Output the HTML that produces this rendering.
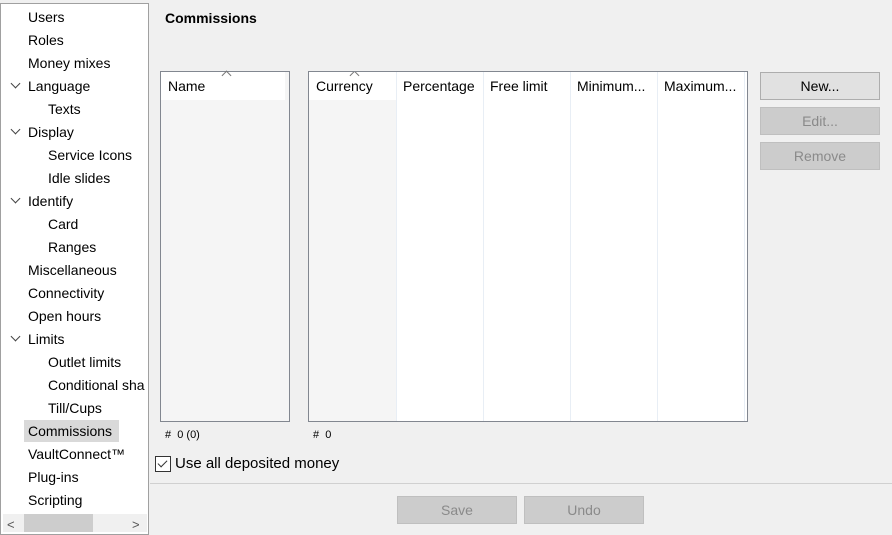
<html><head><style>
body{margin:0;width:892px;height:535px;background:#f0f0f0;font-family:"Liberation Sans",sans-serif;font-size:14px;color:#000;position:relative;overflow:hidden}
.a{position:absolute}
#left{left:0;top:3px;width:147px;height:530px;background:#fff;border:1px solid #a0a0a0}
.it{position:absolute;height:22px;line-height:22px;white-space:nowrap}
.chev{position:absolute;left:11px;width:6px;height:6px;border-right:1.5px solid #444;border-bottom:1.5px solid #444;transform:rotate(45deg)}
.btn{position:absolute;width:118px;height:26px;border:1px solid #adadad;background:#e1e1e1;text-align:center;line-height:26px}
.dis{background:#cccccc;border-color:#bfbfbf;color:#8a8a8a}
.col{position:absolute;top:0;height:349px;border-right:1px solid #e8eef5}
.hd{position:absolute;top:6px;white-space:nowrap}
.caret{position:absolute;top:0;width:6px;height:6px;border-left:1px solid #777;border-top:1px solid #777;transform:rotate(45deg)}
</style></head><body>
<div class="a" id="left">
<div class="it" style="left:27px;top:2px">Users</div>
<div class="it" style="left:27px;top:25px">Roles</div>
<div class="it" style="left:27px;top:48px">Money mixes</div>
<div class="chev" style="top:76px"></div><div class="it" style="left:27px;top:71px">Language</div>
<div class="it" style="left:47px;top:94px">Texts</div>
<div class="chev" style="top:122px"></div><div class="it" style="left:27px;top:117px">Display</div>
<div class="it" style="left:47px;top:140px">Service Icons</div>
<div class="it" style="left:47px;top:163px">Idle slides</div>
<div class="chev" style="top:191px"></div><div class="it" style="left:27px;top:186px">Identify</div>
<div class="it" style="left:47px;top:209px">Card</div>
<div class="it" style="left:47px;top:232px">Ranges</div>
<div class="it" style="left:27px;top:255px">Miscellaneous</div>
<div class="it" style="left:27px;top:278px">Connectivity</div>
<div class="it" style="left:27px;top:301px">Open hours</div>
<div class="chev" style="top:329px"></div><div class="it" style="left:27px;top:324px">Limits</div>
<div class="it" style="left:47px;top:347px">Outlet limits</div>
<div class="it" style="left:47px;top:370px">Conditional sha</div>
<div class="it" style="left:47px;top:393px">Till/Cups</div>
<div class="it" style="left:23px;top:416px;width:95px;background:#d9d9d9;padding-left:4px;box-sizing:border-box">Commissions</div>
<div class="it" style="left:27px;top:439px">VaultConnect™</div>
<div class="it" style="left:27px;top:462px">Plug-ins</div>
<div class="it" style="left:27px;top:485px">Scripting</div>
<div class="a" style="left:2px;top:510px;width:144px;height:18px;background:#f0f0f0"></div>
<div class="a" style="left:23px;top:510px;width:69px;height:18px;background:#cdcdcd"></div>
<div class="a" style="left:6px;top:513px;color:#555;font-size:13px">&lt;</div>
<div class="a" style="left:131px;top:513px;color:#555;font-size:13px">&gt;</div>
</div>
<div class="a" style="left:165px;top:10px;font-weight:bold;font-size:14px">Commissions</div>
<div class="a" style="left:160px;top:71px;width:128px;height:349px;border:1px solid #828790;background:#f5f5f5">
<div class="a" style="left:0;top:0;width:124px;height:28px;background:#fff"></div>
<div class="hd" style="left:7px">Name</div>
<div class="caret" style="left:62px"></div>
</div>
<div class="a" style="left:308px;top:71px;width:438px;height:349px;border:1px solid #828790;background:#fff;overflow:hidden">
<div class="col" style="left:0;width:87px;background:#f5f5f5"><div class="a" style="left:0;top:0;width:87px;height:28px;background:#fff"></div></div>
<div class="col" style="left:88px;width:86px"></div>
<div class="col" style="left:175px;width:86px"></div>
<div class="col" style="left:262px;width:86px"></div>
<div class="col" style="left:349px;width:86px"></div>
<div class="hd" style="left:7px">Currency</div>
<div class="caret" style="left:42px"></div>
<div class="hd" style="left:94px">Percentage</div>
<div class="hd" style="left:181px">Free limit</div>
<div class="hd" style="left:268px">Minimum...</div>
<div class="hd" style="left:355px">Maximum...</div>
</div>
<div class="btn" style="left:760px;top:72px">New...</div>
<div class="btn dis" style="left:760px;top:107px">Edit...</div>
<div class="btn dis" style="left:760px;top:142px">Remove</div>
<div class="a" style="left:165px;top:429px;font-size:11px">#&nbsp; 0 (0)</div>
<div class="a" style="left:313px;top:429px;font-size:11px">#&nbsp; 0</div>
<div class="a" style="left:155px;top:456px;width:14px;height:14px;border:1px solid #333;background:#fff"><div class="a" style="left:4px;top:1px;width:4px;height:8px;border-right:1.5px solid #333;border-bottom:1.5px solid #333;transform:rotate(45deg)"></div></div>
<div class="a" style="left:175px;top:455px;font-size:15px">Use all deposited money</div>
<div class="a" style="left:150px;top:483px;width:742px;height:1px;background:#d0d0d0"></div>
<div class="btn dis" style="left:397px;top:496px">Save</div>
<div class="btn dis" style="left:524px;top:496px">Undo</div>
</body></html>
